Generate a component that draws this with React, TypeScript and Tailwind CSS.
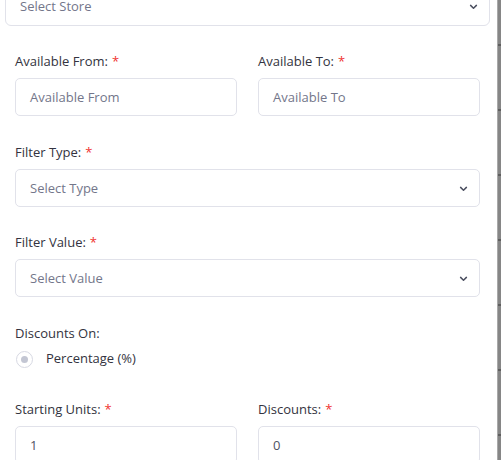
import React from "react";

const font = { fontFamily: '"Open Sans", "Noto Sans", sans-serif' };

function Chevron() {
  return (
    <svg width="9" height="6" viewBox="0 0 9 6" className="shrink-0">
      <path d="M1.6 1.4 L4.5 4.2 L7.4 1.4" fill="none" stroke="#4b4f60" strokeWidth="1.5" strokeLinecap="round" strokeLinejoin="round" />
    </svg>
  );
}

function Label({ text, required = true }: { text: string; required?: boolean }) {
  return (
    <div className="h-5 text-[13px] leading-5 text-[#333340] mb-[7px]">
      {text}
      {required && <span className="text-[#f0332f] ml-1">*</span>}
    </div>
  );
}

function Input({ placeholder, value }: { placeholder?: string; value?: string }) {
  return (
    <div className="h-[38px] rounded-[5px] border border-[#e1e2ea] bg-white flex items-center px-[14px] pt-[2px] text-[13px]">
      {value ? (
        <span className="text-[#4f5263]">{value}</span>
      ) : (
        <span className="text-[#73768a]">{placeholder}</span>
      )}
    </div>
  );
}

function Select({ placeholder }: { placeholder: string }) {
  return (
    <div className="h-[38px] rounded-[5px] border border-[#e1e2ea] bg-white flex items-center justify-between pl-[14px] pr-[11px] pt-[1px] text-[13px]">
      <span className="text-[#73768a]">{placeholder}</span>
      <Chevron />
    </div>
  );
}

export default function App() {
  const marks = [45, 110, 175, 240, 305, 370, 435];
  return (
    <div className="w-[501px] h-[460px] overflow-hidden bg-white flex" style={font}>
      <div className="flex-1 min-w-0">
        <div className="-mt-[13px] pl-[5px] pr-[7px]">
          <div className="h-[39px] rounded-[6px] border border-[#e1e2ea] bg-white flex items-center justify-between pl-[14px] pr-[11px] pt-[1px] text-[13px]">
            <span className="text-[#73768a]">Select Store</span>
            <Chevron />
          </div>
        </div>
        <div className="pl-[15px] pr-[17px] pt-[25px]">
          <div className="grid grid-cols-2 gap-x-[21px]">
            <div>
              <Label text="Available From:" />
              <Input placeholder="Available From" />
            </div>
            <div>
              <Label text="Available To:" />
              <Input placeholder="Available To" />
            </div>
          </div>
          <div className="mt-[26px]">
            <Label text="Filter Type:" />
            <Select placeholder="Select Type" />
          </div>
          <div className="mt-[25px]">
            <Label text="Filter Value:" />
            <Select placeholder="Select Value" />
          </div>
          <div className="mt-[26px]">
            <Label text="Discounts On:" required={false} />
            <div className="flex items-center h-5 -mt-[1px]">
              <div className="w-[17px] h-[17px] rounded-full border border-[#d7d9e3] flex items-center justify-center ml-[1px]">
                <div className="w-[7px] h-[7px] rounded-full bg-[#c3c6d3]" />
              </div>
              <span className="ml-[13px] text-[13px] text-[#333340]">Percentage (%)</span>
            </div>
          </div>
          <div className="grid grid-cols-2 gap-x-[21px] mt-[30px]">
            <div>
              <Label text="Starting Units:" />
              <Input value="1" />
            </div>
            <div>
              <Label text="Discounts:" />
              <Input value="0" />
            </div>
          </div>
        </div>
      </div>
      <div className="w-[4px] h-full bg-[#868686] border-l border-[#a9a9a9] flex flex-col">
        {marks.map((m, i) => (
          <div key={m} className={i === 0 ? "mt-[44px] h-[2px] bg-[#5e5e5e]" : "mt-[63px] h-[2px] bg-[#5e5e5e]"} />
        ))}
      </div>
    </div>
  );
}
